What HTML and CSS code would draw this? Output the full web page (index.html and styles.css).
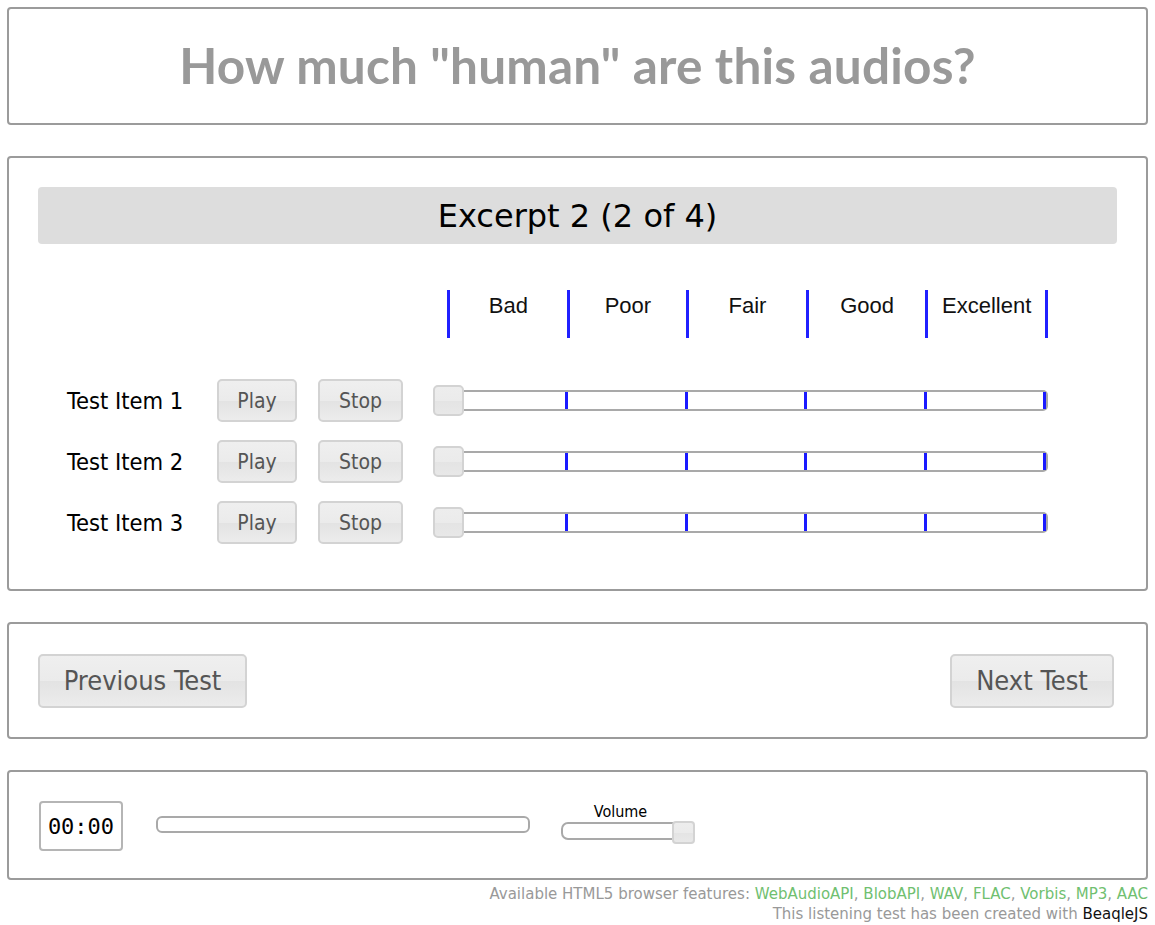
FILE: index.html
```html
<!DOCTYPE html>
<html>
<head>
<meta charset="utf-8">
<link rel="stylesheet" href="styles.css">
</head>
<body>
<div class="panel title-panel">
  <h1 class="title">How much "human" are this audios?</h1>
</div>

<div class="panel test-panel">
  <div class="excerpt">Excerpt 2 (2 of 4)</div>

  <div class="scale-row">
    <div class="spacer"></div>
    <div class="scale">
      <div class="seg">Bad</div>
      <div class="seg">Poor</div>
      <div class="seg">Fair</div>
      <div class="seg">Good</div>
      <div class="seg">Excellent</div>
    </div>
  </div>

  <div class="item-row">
    <div class="item-label">Test Item 1</div>
    <button class="btn small">Play</button>
    <button class="btn small stop">Stop</button>
    <div class="slider">
      <div class="track"><div class="tk"></div><div class="tk"></div><div class="tk"></div><div class="tk"></div><div class="tk"></div></div>
      <div class="thumb"></div>
    </div>
  </div>
  <div class="item-row">
    <div class="item-label">Test Item 2</div>
    <button class="btn small">Play</button>
    <button class="btn small stop">Stop</button>
    <div class="slider">
      <div class="track"><div class="tk"></div><div class="tk"></div><div class="tk"></div><div class="tk"></div><div class="tk"></div></div>
      <div class="thumb"></div>
    </div>
  </div>
  <div class="item-row">
    <div class="item-label">Test Item 3</div>
    <button class="btn small">Play</button>
    <button class="btn small stop">Stop</button>
    <div class="slider">
      <div class="track"><div class="tk"></div><div class="tk"></div><div class="tk"></div><div class="tk"></div><div class="tk"></div></div>
      <div class="thumb"></div>
    </div>
  </div>
</div>

<div class="panel nav-panel">
  <button class="btn big">Previous Test</button>
  <button class="btn big next">Next Test</button>
</div>

<div class="panel player-panel">
  <div class="time">00:00</div>
  <div class="progress"></div>
  <div class="volume">
    <div class="vol-label">Volume</div>
    <div class="vol-slider"><div class="vol-thumb"></div></div>
  </div>
</div>

<div class="footer">
  <div>Available HTML5 browser features: <span class="ok">WebAudioAPI</span>, <span class="ok">BlobAPI</span>, <span class="ok">WAV</span>, <span class="ok">FLAC</span>, <span class="ok">Vorbis</span>, <span class="ok">MP3</span>, <span class="ok">AAC</span></div>
  <div>This listening test has been created with <span class="brand">BeaqleJS</span></div>
</div>
</body>
</html>
```

FILE: styles.css
```css
html, body {
  margin: 0;
  padding: 0;
  background: #fff;
}
body {
  padding: 7px 7px 0 7px;
  font-family: "DejaVu Sans Condensed", "DejaVu Sans", sans-serif;
  color: #000;
}
.panel {
  border: 2px solid #9b9b9b;
  border-radius: 4px;
  margin-bottom: 31px;
}
.title-panel {
  height: 114px;
  display: flex;
  align-items: center;
  justify-content: center;
}
.title {
  margin: 0;
  font-family: "Lato", sans-serif;
  font-weight: bold;
  font-size: 49.5px;
  color: #999;
  letter-spacing: 0.2px;
  margin-top: -3px;
}
.test-panel {
  padding: 29px 29px 30px 29px;
  height: 372px;
}
.excerpt {
  background: #dddddd;
  border-radius: 4px;
  height: 57px;
  display: flex;
  align-items: center;
  justify-content: center;
  font-family: "DejaVu Sans", sans-serif;
  font-size: 32px;
  color: #000;
}
.scale-row {
  display: flex;
  margin-top: 46px;
  height: 48px;
}
.spacer {
  width: 409px;
}
.scale {
  display: flex;
  width: 598px;
  border-left: 3px solid #2020ff;
}
.seg {
  flex: 1;
  border-right: 3px solid #2020ff;
  text-align: center;
  font-family: "Liberation Sans", Arial, sans-serif;
  font-size: 22px;
  color: #111;
  padding-top: 3px;
}
.item-row {
  display: flex;
  align-items: center;
  height: 43px;
  margin-top: 18px;
  padding-left: 29px;
}
.scale-row + .item-row {
  margin-top: 41px;
}
.item-label {
  width: 150px;
  font-size: 23.5px;
  color: #000;
}
.btn {
  font-family: "DejaVu Sans Condensed", "DejaVu Sans", sans-serif;
  color: #555;
  background: linear-gradient(#efefef 0%, #ebebeb 50%, #e3e3e3 51%, #ececec 100%);
  border: 2px solid #d3d3d3;
  border-radius: 5px;
  padding: 0;
  cursor: pointer;
}
.small {
  width: 80px;
  height: 43px;
  font-size: 21px;
}
.small.stop {
  width: 85px;
  margin-left: 21px;
  margin-right: 30px;
}
.slider {
  position: relative;
  width: 615px;
  height: 31px;
  display: flex;
  align-items: center;
}
.track {
  flex: 1;
  height: 17px;
  border: 2px solid #a9a9a9;
  border-radius: 0 5px 5px 0;
  display: flex;
  padding-left: 14px;
}
.tk {
  flex: 1;
  border-right: 3px solid #1a1aff;
}
.thumb {
  position: absolute;
  left: 0;
  top: 0;
  width: 27px;
  height: 27px;
  border: 2px solid #d3d3d3;
  border-radius: 5px;
  background: linear-gradient(#ededed 0%, #ebebeb 50%, #e4e4e4 51%, #e8e8e8 100%);
}
.nav-panel {
  height: 53px;
  padding: 30px 32px 30px 29px;
  display: flex;
  justify-content: space-between;
  align-items: center;
}
.big {
  height: 54px;
  font-size: 27px;
}
.big:first-child {
  width: 209px;
}
.big.next {
  width: 164px;
}
.player-panel {
  height: 106px;
  display: flex;
  align-items: center;
  padding-left: 30px;
  margin-bottom: 4px;
}
.time {
  width: 80px;
  height: 46px;
  border: 2px solid #b5b5b5;
  border-radius: 4px;
  display: flex;
  align-items: center;
  justify-content: center;
  font-family: "DejaVu Sans Mono", monospace;
  font-size: 22px;
  color: #000;
  margin-top: 2px;
}
.progress {
  width: 370px;
  height: 13px;
  border: 2px solid #a9a9a9;
  border-radius: 6px;
  margin-left: 33px;
  margin-top: -2px;
}
.volume {
  margin-left: 31px;
  display: flex;
  flex-direction: column;
  align-items: center;
  margin-top: -9px;
}
.vol-label {
  font-size: 16px;
  color: #000;
  margin-bottom: 1px;
  margin-right: 14px;
}
.vol-slider {
  position: relative;
  width: 129px;
  height: 14px;
  border: 2px solid #a9a9a9;
  border-radius: 7px;
}
.vol-thumb {
  position: absolute;
  right: -3px;
  top: -3px;
  width: 19px;
  height: 19px;
  border: 2px solid #d3d3d3;
  border-radius: 4px;
  background: linear-gradient(#ededed 0%, #ebebeb 50%, #e4e4e4 51%, #e8e8e8 100%);
}
.footer {
  text-align: right;
  font-family: "DejaVu Sans", sans-serif;
  font-size: 15px;
  line-height: 20px;
  color: #999;
}
.ok {
  color: #70c070;
}
.brand {
  color: #111;
}
```
